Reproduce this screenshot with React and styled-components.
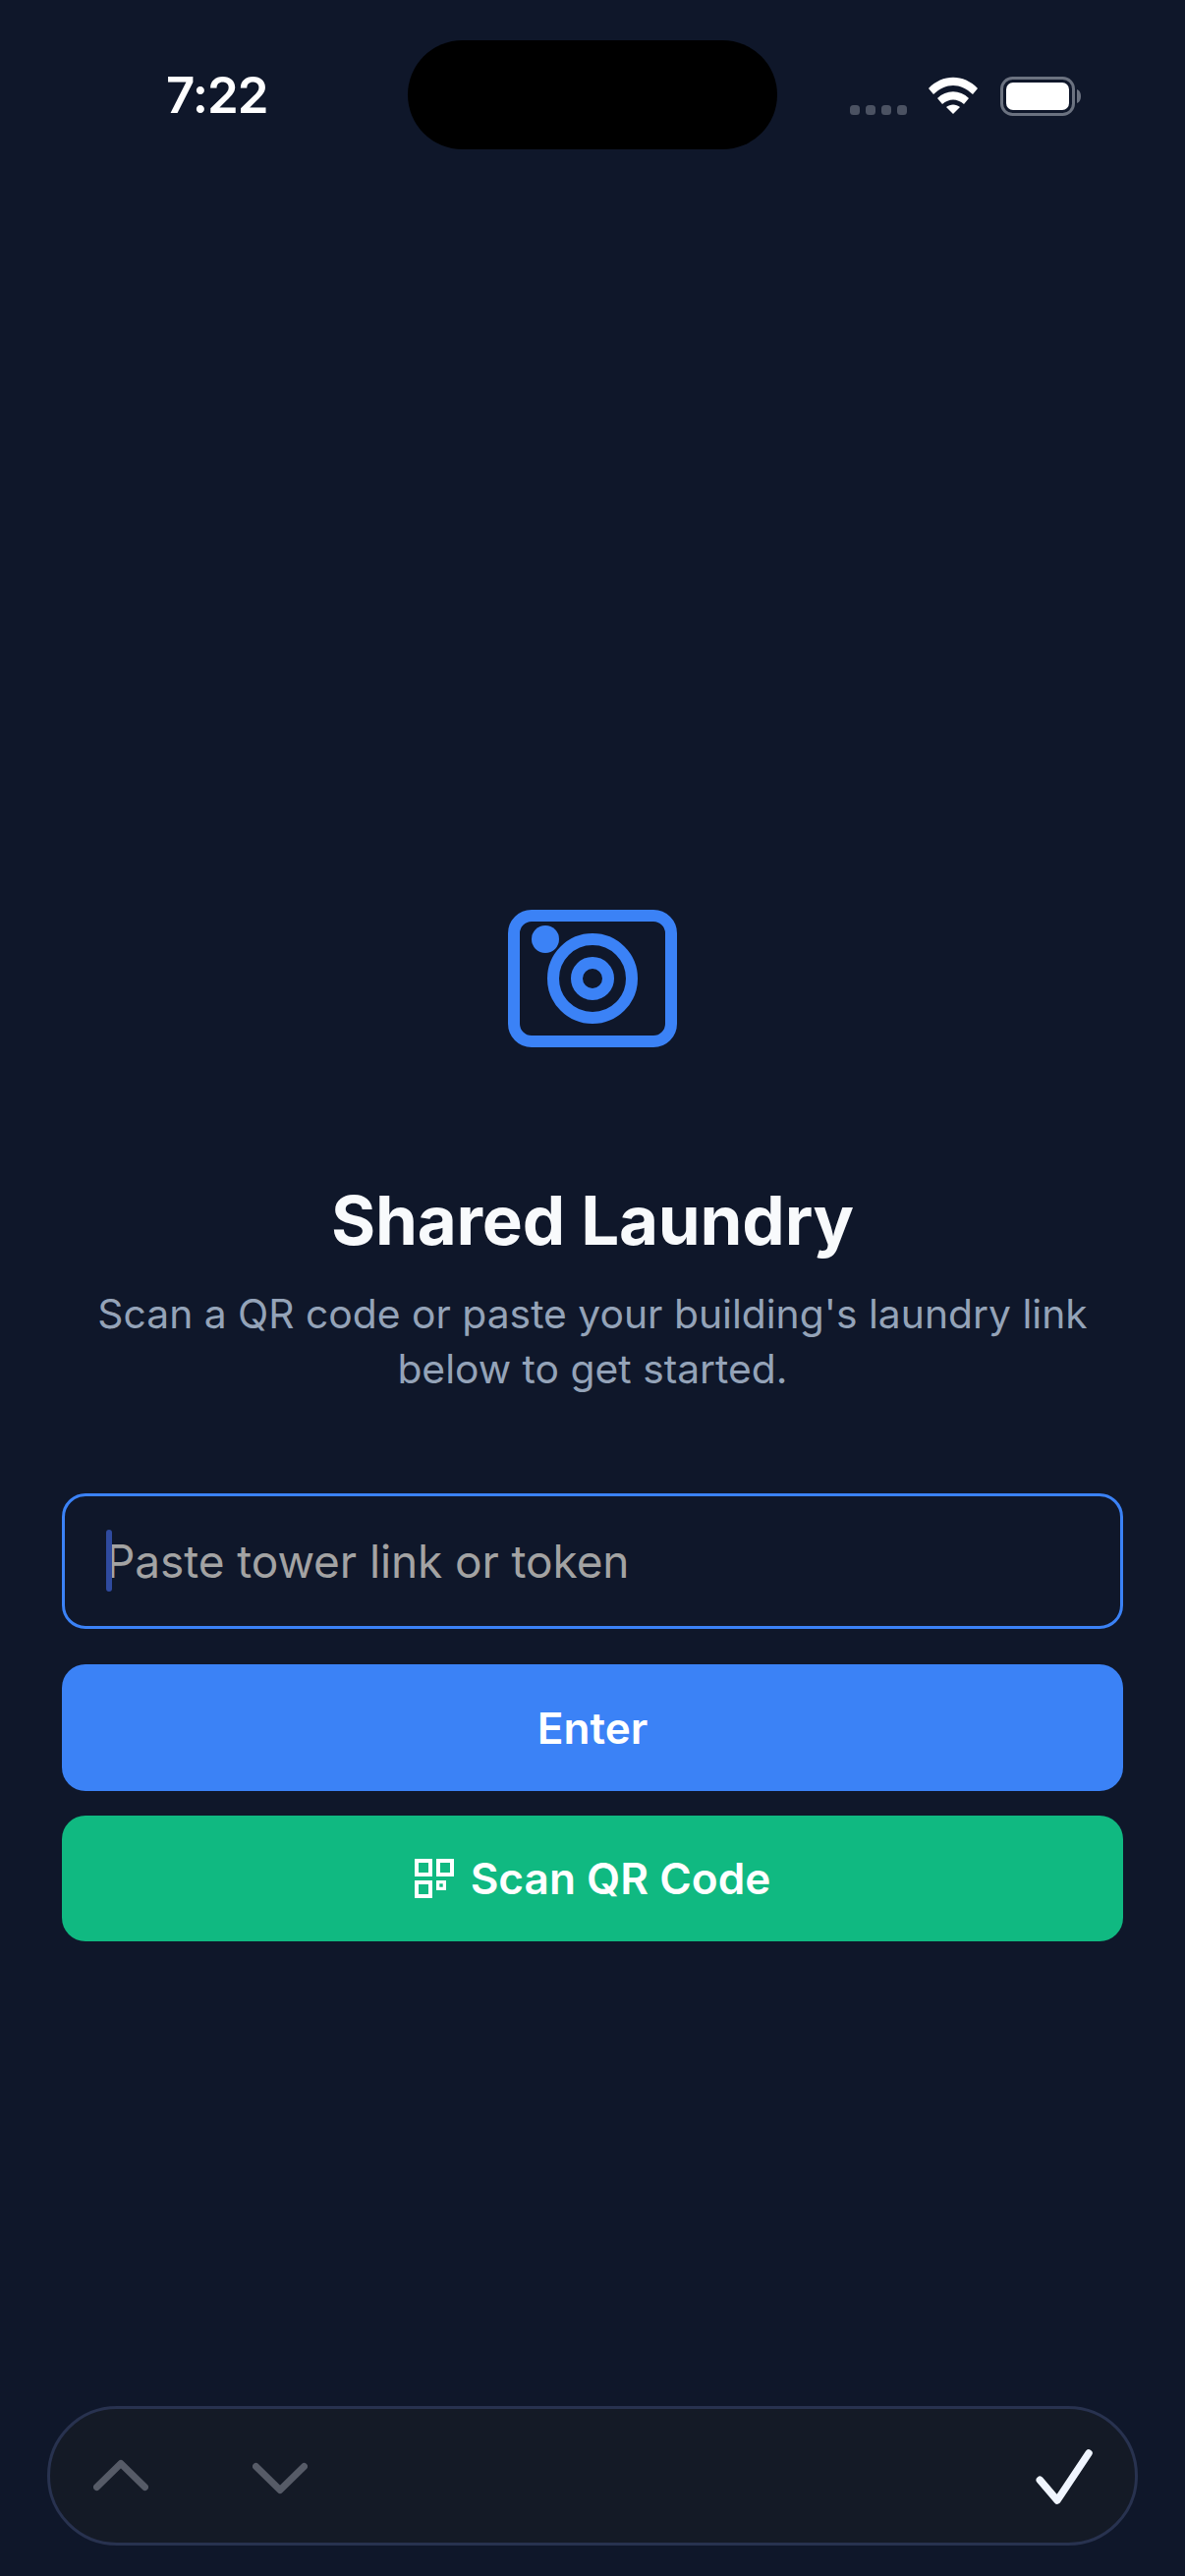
import React from "react";
import styled, { createGlobalStyle } from "styled-components";

const GlobalStyle = createGlobalStyle`
  html, body {
    margin: 0;
    padding: 0;
    background: #0f172a;
  }
  * {
    box-sizing: border-box;
  }
`

const Screen = styled.div`
  width: 1206px;
  height: 2622px;
  display: flex;
  flex-direction: column;
  background: #0f172a;
  font-family: Inter, "Liberation Sans", sans-serif;
  overflow: hidden;
`

const StatusBar = styled.div`
  display: grid;
  grid-template-columns: 415px 376px 1fr;
  height: 152px;
  padding-top: 41px;
`

const Time = styled.div`
  padding: 31px 0 0 169px;
  font-size: 51px;
  line-height: 50px;
  font-weight: 600;
  letter-spacing: -1px;
  color: #fff;
`

const Island = styled.div`
  height: 111px;
  background: #000;
  border-radius: 56px;
`

const StatusIcons = styled.div`
  display: flex;
  align-items: flex-start;
  padding: 37px 0 0 74px;
`

const Main = styled.main`
  flex: 1;
  display: flex;
  flex-direction: column;
  padding: 774px 63px 0;
`

const Logo = styled.svg`
  display: block;
  align-self: center;
  width: 172px;
  height: 140px;
`

const Title = styled.h1`
  margin: 135px 0 0;
  font-size: 69px;
  line-height: 82px;
  font-weight: 700;
  letter-spacing: -0.2px;
  text-align: center;
  color: #f8fafc;
`

const Subtitle = styled.p`
  margin: 26px 0 0;
  font-size: 40.8px;
  line-height: 56px;
  text-align: center;
  color: #94a3b8;
`

const Field = styled.div`
  position: relative;
  margin-top: 99px;
`

const TokenInput = styled.input`
  display: block;
  width: 100%;
  height: 138px;
  padding: 0 42px 0 42px;
  background: transparent;
  border: 3px solid #3b82f6;
  border-radius: 24px;
  outline: none;
  font-family: inherit;
  font-size: 46px;
  letter-spacing: -0.1px;
  color: #fff;

  &::placeholder {
    color: #a3a3a3;
    opacity: 1;
  }
`

const Caret = styled.span`
  position: absolute;
  left: 45px;
  top: 37px;
  width: 6px;
  height: 63px;
  border-radius: 3px;
  background: #2f4a9e;
`

const Button = styled.button`
  display: flex;
  align-items: center;
  justify-content: center;
  gap: 17px;
  width: 100%;
  height: ${(p) => p.$height}px;
  margin-top: ${(p) => p.$top}px;
  background: ${(p) => p.$color};
  border: none;
  border-radius: 24px;
  font-family: inherit;
  font-size: 44.2px;
  font-weight: 600;
  color: #fff;
`

const Toolbar = styled.div`
  display: flex;
  align-items: center;
  height: 142px;
  margin: 0 48px 31px;
  padding: 0 41px 0 44px;
  background: #141a26;
  border: 3px solid #28324f;
  border-radius: 71px;
`

const Chevrons = styled.div`
  display: flex;
  gap: 106px;
  flex: 1;
`

const Arrow = styled.svg`
  display: block;
  width: 56px;
  height: 40px;
  fill: none;
  stroke: #565b67;
  stroke-width: 7;
  stroke-linecap: round;
  stroke-linejoin: round;
`

const Check = styled.svg`
  display: block;
  width: 62px;
  height: 60px;
  fill: none;
  stroke: #f0f5ff;
  stroke-width: 7.5;
  stroke-linecap: round;
  stroke-linejoin: round;
`

const SignalDots = () => (
  <svg width="58" height="10" viewBox="0 0 58 10" style={{ marginTop: 29 }}>
    {[0, 16, 32, 48].map((x) => (
      <rect key={x} x={x} width="10" height="10" rx="3.5" fill="#4b5262" />
    ))}
  </svg>
);

const Wifi = () => (
  <svg width="50" height="38" viewBox="0 0 50 38" style={{ marginLeft: 22 }}>
    <path d="M0 12 C14 -3 36 -3 50 12 L45 18 C32 6 18 6 5 18 Z" fill="#fff" />
    <path d="M9 22 C18 13 32 13 41 22 L36 28 C29 22 21 22 14 28 Z" fill="#fff" />
    <path d="M18 31 C22 27.5 28 27.5 32 31 L25 38 Z" fill="#fff" />
  </svg>
);

const Battery = () => (
  <svg width="84" height="40" viewBox="0 0 84 40" style={{ marginLeft: 23 }}>
    <rect x="1.5" y="1.5" width="73" height="37" rx="11" fill="none" stroke="#6b7280" strokeWidth="3" />
    <rect x="6" y="6" width="64" height="28" rx="7" fill="#fff" />
    <path d="M78 13 C81 14 82 17 82 20 C82 23 81 26 78 27 Z" fill="#6b7280" />
  </svg>
);

const QrIcon = () => (
  <svg width="40" height="40" viewBox="0 0 40 40" fill="none" stroke="#fff" strokeWidth="4">
    <rect x="2" y="2" width="14" height="14" />
    <rect x="24" y="2" width="14" height="14" />
    <rect x="2" y="24" width="14" height="14" />
    <rect x="23.65" y="23.65" width="6.7" height="6.7" strokeWidth="3.3" />
  </svg>
);

const App = () => {
  return (
    <Screen>
      <GlobalStyle />
      <StatusBar>
        <Time>7:22</Time>
        <Island />
        <StatusIcons>
          <SignalDots />
          <Wifi />
          <Battery />
        </StatusIcons>
      </StatusBar>
      <Main>
        <Logo viewBox="0 0 172 140" fill="none" stroke="#3b82f6" strokeWidth="12">
          <rect x="6" y="6" width="160" height="128" rx="18" />
          <circle cx="86" cy="70" r="40" />
          <circle cx="86" cy="70" r="16" />
          <circle cx="38" cy="30" r="14" fill="#3b82f6" stroke="none" />
        </Logo>
        <Title>Shared Laundry</Title>
        <Subtitle>
          Scan a QR code or paste your building's laundry link
          <br />
          below to get started.
        </Subtitle>
        <Field>
          <TokenInput placeholder="Paste tower link or token" />
          <Caret />
        </Field>
        <Button $color="#3b82f6" $height={129} $top={36}>Enter</Button>
        <Button $color="#10b981" $height={128} $top={25}>
          <QrIcon />
          Scan QR Code
        </Button>
      </Main>
      <Toolbar>
        <Chevrons>
          <Arrow viewBox="0 0 56 40">
            <path d="M3.5 31.5 L28 7.5 L52.5 31.5" />
          </Arrow>
          <Arrow viewBox="0 0 56 40">
            <path d="M3.5 10.5 L28 34.5 L52.5 10.5" />
          </Arrow>
        </Chevrons>
        <Check viewBox="0 0 62 60">
          <path d="M6.3 34.3 L24 55 L56 7" />
        </Check>
      </Toolbar>
    </Screen>
  );
};

export default App;
